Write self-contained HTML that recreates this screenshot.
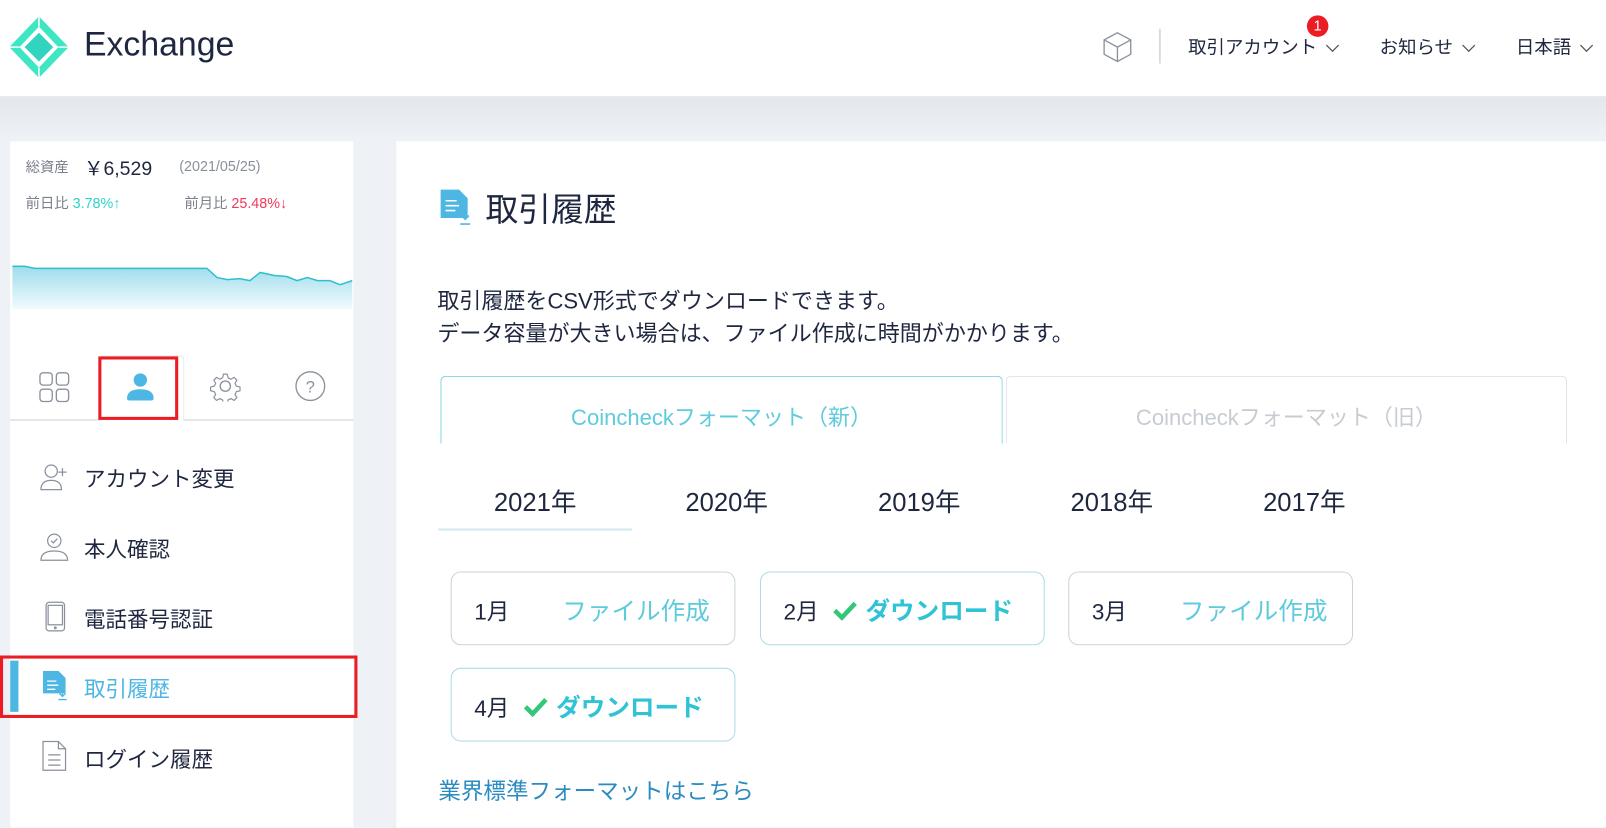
<!DOCTYPE html>
<html><head><meta charset="utf-8"><style>
*{margin:0;padding:0;box-sizing:border-box}
html,body{width:1606px;height:808px;overflow:hidden;background:#eef1f5}
#w{position:absolute;left:0;top:0;width:1568px;height:789px;transform:scale(1.02423);transform-origin:0 0;font-family:"Liberation Sans","Noto Sans CJK JP",sans-serif;color:#1f2740}
.a{position:absolute;white-space:nowrap}
.hdr{position:absolute;left:0;top:0;width:1568px;height:95px;background:#fff;border-bottom:1px solid #dfe3e8}
.grad{position:absolute;left:0;top:95px;width:1568px;height:40px;background:linear-gradient(#e3e7ed,#eef1f5)}
.card{position:absolute;background:#fff}
.mb{position:absolute;width:278px;height:72px;border:1px solid #c9d3dc;border-radius:10px;font-size:21px}
.mb .m{position:absolute;left:22px;top:21px;color:#1f2740;font-size:22px}
.mb .f{position:absolute;top:18px;color:#5ecbdc;font-size:24px}
.mb .d{position:absolute;top:18px;color:#2fc3d6;font-size:24px;font-weight:bold}
.mb .d svg{vertical-align:-1px;margin-right:8px}
.blue{border-color:#a9dbe8}
.chev{display:inline-block;vertical-align:middle;margin-left:8px}
.mi{font-size:21px}
</style></head><body><div id="w">
<div class="hdr"></div>
<div class="grad"></div>
<svg class="a" style="left:9px;top:16px" width="58" height="60" viewBox="0 0 58 60">
<polygon points="29,0 58,30 29,60 0,30" fill="#3fe6c4"/>
<polygon points="29,10 48,30 29,50 10,30" fill="#fff"/>
<polygon points="29,16 43,30 29,44 15,30" fill="#32d4c0"/>
<path d="M0 30 L10 30 M48 30 L58 30 M29 0 L29 10 M29 50 L29 60" stroke="#fff" stroke-width="1.5"/>
</svg>
<div class="a" style="left:82px;top:24px;font-size:33px;color:#1f2740">Exchange</div>
<svg class="a" style="left:1076px;top:30px" width="30" height="32" viewBox="0 0 30 32" fill="none" stroke="#8a909c" stroke-width="1.3"><path d="M15 2 L28 9 L28 23 L15 30 L2 23 L2 9 Z M2 9 L15 16 L28 9 M15 16 L15 30"/></svg>
<div class="a" style="left:1132px;top:28px;width:1px;height:34px;background:#b9bec7"></div>
<div class="a" style="left:1160px;top:32px;font-size:18px">取引アカウント<svg class="chev" width="14" height="9" viewBox="0 0 14 9"><path d="M1 1l6 6 6-6" fill="none" stroke="#555" stroke-width="1.2"/></svg></div>
<div class="a" style="left:1276px;top:15px;width:21px;height:21px;border-radius:50%;background:#ec1c24;color:#fff;font-size:14px;text-align:center;line-height:21px">1</div>
<div class="a" style="left:1347px;top:32px;font-size:18px">お知らせ<svg class="chev" width="14" height="9" viewBox="0 0 14 9"><path d="M1 1l6 6 6-6" fill="none" stroke="#555" stroke-width="1.2"/></svg></div>
<div class="a" style="left:1480px;top:32px;font-size:18px">日本語<svg class="chev" width="14" height="9" viewBox="0 0 14 9"><path d="M1 1l6 6 6-6" fill="none" stroke="#555" stroke-width="1.2"/></svg></div>

<div class="card" style="left:10px;top:138px;width:335px;height:670px"></div>
<div class="a" style="left:25px;top:153px;font-size:14px;color:#7a808c">総資産</div>
<div class="a" style="left:82px;top:150px;font-size:19px;color:#1f2740">￥6,529</div>
<div class="a" style="left:175px;top:154px;font-size:14px;color:#8a909c">(2021/05/25)</div>
<div class="a" style="left:25px;top:188px;font-size:14px;color:#7a808c">前日比 <span style="color:#2fd3c8">3.78%↑</span></div>
<div class="a" style="left:180px;top:188px;font-size:14px;color:#7a808c">前月比 <span style="color:#ef3a5d">25.48%↓</span></div>
<svg class="a" style="left:12px;top:250px" width="332" height="52" viewBox="0 0 332 52">
<defs><linearGradient id="g" x1="0" y1="0" x2="0" y2="1"><stop offset="0" stop-color="#9fdcec"/><stop offset="1" stop-color="#f2fbfd"/></linearGradient></defs>
<path d="M0 10 L12 10 L22 12 L190 12 L200 21 L210 23 L222 22 L232 24 L242 16 L256 19 L268 20 L278 24 L288 21 L298 24 L310 24 L320 28 L332 24 L332 52 L0 52Z" fill="url(#g)"/>
<path d="M0 10 L12 10 L22 12 L190 12 L200 21 L210 23 L222 22 L232 24 L242 16 L256 19 L268 20 L278 24 L288 21 L298 24 L310 24 L320 28 L332 24" fill="none" stroke="#2cc0d0" stroke-width="1.5"/>
</svg>
<div class="a" style="left:10px;top:409px;width:335px;height:2px;background:#e3e6ea"></div>
<div class="a" style="left:97px;top:347px;width:83px;height:64px;background:#fff;border:1px solid #e3e6ea;border-bottom:none;border-radius:4px 4px 0 0"></div>
<div class="a" style="left:96px;top:348px;width:78px;height:62px;border:3px solid #ec1c24"></div>
<svg class="a" style="left:38px;top:363px" width="30" height="30" viewBox="0 0 30 30" fill="none" stroke="#8a909c" stroke-width="1.3"><rect x="1" y="1" width="12" height="12" rx="3"/><rect x="17" y="1" width="12" height="12" rx="3"/><rect x="1" y="17" width="12" height="12" rx="3"/><rect x="17" y="17" width="12" height="12" rx="3"/></svg>
<svg class="a" style="left:122px;top:362px" width="30" height="30" viewBox="0 0 30 30" fill="#4db6e2"><circle cx="15" cy="9" r="6.5"/><path d="M2 27 Q2 18 15 18 Q28 18 28 27 Q28 29 26 29 L4 29 Q2 29 2 27Z"/></svg>
<svg class="a" style="left:205px;top:362px" width="30" height="30" viewBox="0 0 30 30" fill="none" stroke="#8a909c" stroke-width="1.3"><circle cx="15" cy="15" r="5"/><path d="M13 2h4l1 4 3 1.5 3.5-2 3 3-2 3.5 1.5 3 4 1v4l-4 1-1.5 3 2 3.5-3 3-3.5-2-3 1.5-1 4h-4l-1-4-3-1.5-3.5 2-3-3 2-3.5-1.5-3-4-1v-4l4-1 1.5-3-2-3.5 3-3 3.5 2 3-1.5z" transform="translate(1.5 1.5) scale(.9)"/></svg>
<svg class="a" style="left:288px;top:362px" width="30" height="30" viewBox="0 0 30 30" fill="none" stroke="#8a909c" stroke-width="1.3"><circle cx="15" cy="15" r="14"/><text x="15" y="21" font-size="16" text-anchor="middle" fill="#8a909c" stroke="none" font-family="Liberation Sans">?</text></svg>

<svg class="a" style="left:38px;top:452px" width="30" height="28" viewBox="0 0 30 28" fill="none" stroke="#8a909c" stroke-width="1.2"><circle cx="12" cy="8" r="6"/><path d="M2 26 Q2 17 12 17 Q22 17 22 26Z"/><path d="M23 5v8M19 9h8"/></svg>
<div class="a mi" style="left:82px;top:452px">アカウント変更</div>
<svg class="a" style="left:38px;top:519px" width="30" height="30" viewBox="0 0 30 30" fill="none" stroke="#8a909c" stroke-width="1.2"><circle cx="15" cy="9" r="6.5"/><path d="M12 9l2 2 4-4"/><path d="M2 28 Q2 19 15 19 Q28 19 28 28Z"/></svg>
<div class="a mi" style="left:82px;top:521px">本人確認</div>
<svg class="a" style="left:44px;top:587px" width="20" height="30" viewBox="0 0 20 30" fill="none" stroke="#8a909c" stroke-width="1.2"><rect x="1" y="1" width="18" height="28" rx="3"/><rect x="3" y="4" width="14" height="19"/><circle cx="10" cy="26" r=".8" fill="#8a909c"/></svg>
<div class="a mi" style="left:82px;top:589px">電話番号認証</div>
<div class="a" style="left:10px;top:645px;width:8px;height:50px;background:#4db6e2"></div>
<svg class="a" style="left:40px;top:655px" width="28" height="30" viewBox="0 0 28 30"><path d="M2 0h15l7 7v15H2Z" fill="#4db6e2"/><path d="M6 10h9M6 14h11M6 18h8" stroke="#fff" stroke-width="1.3"/><path d="M21 17v8M18 22l3 3 3-3M17 28h8" stroke="#4db6e2" stroke-width="1.3" fill="none"/></svg>
<div class="a mi" style="left:82px;top:657px;color:#4db6e2">取引履歴</div>
<div class="a" style="left:0;top:640px;width:349px;height:61px;border:3px solid #ec1c24"></div>
<svg class="a" style="left:41px;top:723px" width="24" height="30" viewBox="0 0 24 30" fill="none" stroke="#8a909c" stroke-width="1.2"><path d="M1 1h15l7 7v21H1Z"/><path d="M16 1v7h7M6 14h12M6 19h12M6 24h12"/></svg>
<div class="a mi" style="left:82px;top:726px">ログイン履歴</div>

<div class="card" style="left:387px;top:138px;width:1181px;height:670px"></div>
<svg class="a" style="left:430px;top:184px" width="34" height="36" viewBox="0 0 28 30"><path d="M0 1h15l7 7v16H0Z" fill="#4db6e2"/><path d="M4 10h9M4 14h11M4 18h8" stroke="#fff" stroke-width="1.3"/><path d="M20 17v8M17 22l3 3 3-3M16 29h8" stroke="#4db6e2" stroke-width="1.3" fill="none"/></svg>
<div class="a" style="left:474px;top:180px;font-size:32px">取引履歴</div>
<div class="a" style="left:427px;top:278px;font-size:21.5px;line-height:32px">取引履歴をCSV形式でダウンロードできます。<br>データ容量が大きい場合は、ファイル作成に時間がかかります。</div>
<div class="a" style="left:430px;top:367px;width:549px;height:70px;border:1.5px solid #7fd3e2;border-bottom:none;border-radius:5px 5px 0 0;text-align:center;line-height:80px;font-size:21.5px;color:#5ecbdc">Coincheckフォーマット（新）</div>
<div class="a" style="left:982px;top:367px;width:548px;height:70px;border:1.5px solid #dfe3e8;border-bottom:none;border-radius:5px 5px 0 0;text-align:center;line-height:80px;font-size:21.5px;color:#c7ccd3">Coincheckフォーマット（旧）</div>
<div class="a" style="left:387px;top:433px;width:1181px;height:5px;background:#fff"></div>
<div class="a" style="left:428px;top:471px;width:189px;text-align:center;font-size:25px">2021年</div>
<div class="a" style="left:615px;top:471px;width:189px;text-align:center;font-size:25px">2020年</div>
<div class="a" style="left:803px;top:471px;width:189px;text-align:center;font-size:25px">2019年</div>
<div class="a" style="left:991px;top:471px;width:189px;text-align:center;font-size:25px">2018年</div>
<div class="a" style="left:1179px;top:471px;width:189px;text-align:center;font-size:25px">2017年</div>
<div class="a" style="left:428px;top:516px;width:189px;height:2px;background:#d3e7ef"></div>

<div class="mb" style="left:440px;top:558px"><span class="m">1月</span><span class="f" style="left:108px">ファイル作成</span></div>
<div class="mb blue" style="left:742px;top:558px"><span class="m">2月</span><span class="d" style="left:70px"><svg width="24" height="20" viewBox="0 0 24 20"><path d="M2 10l7 7L22 3" fill="none" stroke="#35c779" stroke-width="4.5"/></svg>ダウンロード</span></div>
<div class="mb" style="left:1043px;top:558px"><span class="m">3月</span><span class="f" style="left:108px">ファイル作成</span></div>
<div class="mb blue" style="left:440px;top:652px"><span class="m">4月</span><span class="d" style="left:70px"><svg width="24" height="20" viewBox="0 0 24 20"><path d="M2 10l7 7L22 3" fill="none" stroke="#35c779" stroke-width="4.5"/></svg>ダウンロード</span></div>
<div class="a" style="left:428px;top:755px;font-size:22px;color:#2a8bc0">業界標準フォーマットはこちら</div>
</div></body></html>
